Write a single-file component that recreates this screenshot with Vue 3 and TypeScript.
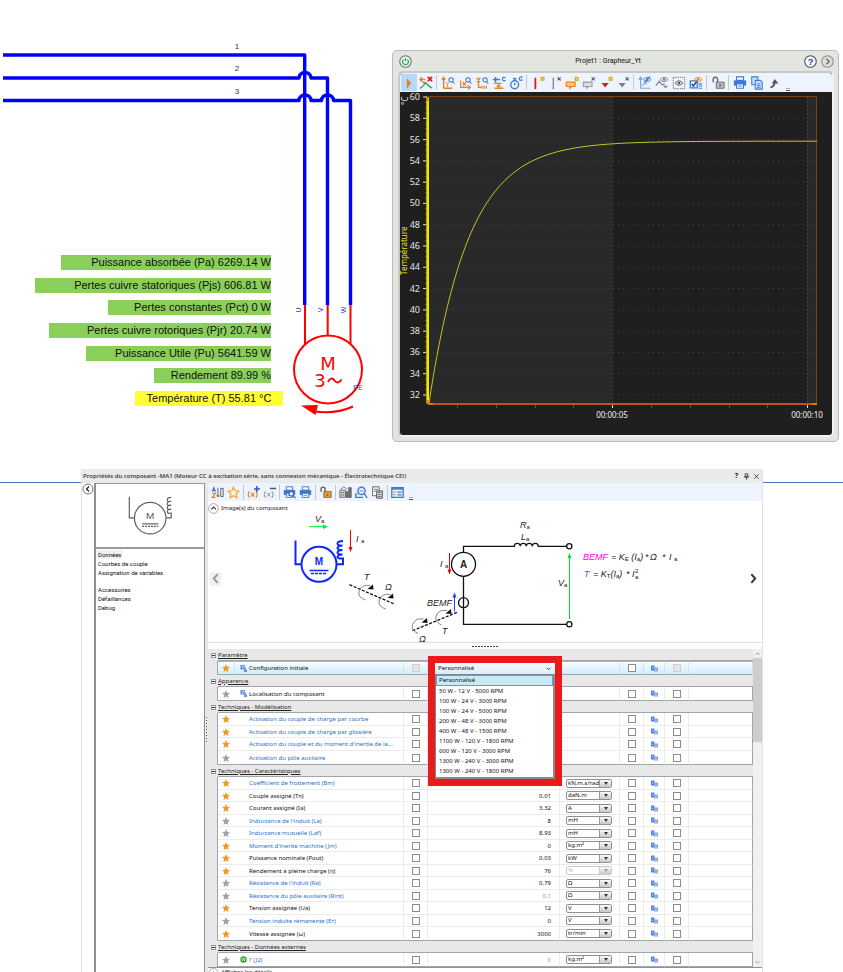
<script setup lang="ts">
import { ref } from 'vue'

interface Shape { d: string; f?: string; s?: string; w?: number; dash?: string }
interface Tool { label: string; icon: Shape[]; active?: boolean; sep?: boolean }

const OR = '#ee7d1c'
const BL = '#3f78d6'
const GR = '#7c7f84'
const RD = '#e5141c'
const YE = '#dba617'

const lens = (c: string): Shape[] => [
  { d: 'M14 4.500a2.500 2.500 0 1 1-5 0a2.500 2.500 0 0 1 5 0zM13.200 6.500l2 2.200', s: c, w: 1.2 },
]
const spark: Shape[] = [{ d: 'M11 1h4.500v4.500h-4.500z', f: YE }, { d: 'M12.500 2.500h1.500v1.500h-1.500z', f: '#fff3a8' }]
const cross: Shape[] = [{ d: 'M11 1.500l3.500 3.500M14.500 1.500l-3.500 3.500', s: '#555', w: 1.2 }]
const eye = (c: string, x = 0, y = 0): Shape[] => [
  { d: `M${6 + x} ${4 + y}q4.500-5 9 0q-4.500 5-9 0z`, s: c, w: 1 },
  { d: `M${9 + x} ${4 + y}a1.500 1.500 0 1 0 3 0a1.500 1.500 0 1 0-3 0z`, f: c },
]
const printer: Shape[] = [
  { d: 'M4 1h8v4H4z', f: '#fff', s: BL, w: 1.2 },
  { d: 'M1 5h14v6H1z', f: BL },
  { d: 'M4 9h8v5H4z', f: '#fff', s: BL, w: 1.2 },
  { d: 'M5.500 11.500h5', s: BL, w: 1 },
]
const lock = (c: string, body: string): Shape[] => [
  { d: 'M2.500 7V4q0-2.500 2.500-2.500T7.500 4v3', s: c, w: 1.6 },
  { d: 'M6 7h9v7H6z', f: body, s: c, w: 1 },
  { d: 'M9.500 9.500h2v2.500h-2z', f: c },
]

const plotTools: Tool[] = [
  { label: 'Lecture', active: true, icon: [{ d: 'M5.500 2.500l5 5.500-5 6.500z', f: OR }] },
  { label: 'Effacer les courbes', icon: [
    { d: 'M1 4h6M3.500 1.500L1 4l2.500 2.500', s: OR, w: 1.5 },
    { d: 'M10 1l5 5M15 1l-5 5', s: RD, w: 2 },
    { d: 'M1 14C5 13 6 7 9 8', s: GR, w: 1.5 }, { d: 'M4 7c4 0 6 4 11 7', s: '#3b9a3b', w: 1.5 }] },
  { label: 'Zoom vertical', sep: true, icon: [
    { d: 'M3 2v12M1 4.500L3 1.500l2 3M3 14h10', s: OR, w: 1.5 }, { d: 'M6 7l1.500 2.500L9 7M7.500 9.500v3', s: OR, w: 1 }, ...lens(BL)] },
  { label: 'Zoom horizontal', icon: [
    { d: 'M3 5v8h11M11.500 10.500L14 13l-2.500 2.500M5.500 7l3.500 4M9 7l-3.500 4', s: OR, w: 1.3 }, ...lens(BL)] },
  { label: 'Zoom X et Y', icon: [
    { d: 'M4 4v9h3M2 2l2 2.500L6 2M2 6.500h4M8 11v3.500M10.500 11v3.500M13 11v3.500', s: OR, w: 1.4 }, ...lens(BL)] },
  { label: 'Ajuster les axes', icon: [
    { d: 'M1 4h8M4 1v6', s: BL, w: 1.8 }, { d: 'M2 8.500h9M3 14h10M7.500 9v5M5 11.500h5', s: OR, w: 1.5 },
    { d: 'M15.500 2q-3.500-1.500-3.500 1.500t3.500 1.500', s: BL, w: 1.4 }] },
  { label: 'Durée', icon: [
    { d: 'M11 10a4.500 4.500 0 1 1-9 0a4.500 4.500 0 0 1 9 0zM6.500 5.500V3.500M4.500 3h4M6.500 8v2.500', s: BL, w: 1.6 },
    { d: 'M15.500 1.500q-3.500-1.500-3.500 1.500t3.500 1.500', s: BL, w: 1.4 }] },
  { label: 'Ajouter un curseur', sep: true, icon: [{ d: 'M5 2v13', s: RD, w: 2 }, ...spark] },
  { label: 'Supprimer le curseur', icon: [{ d: 'M6 2v13', s: '#666', w: 1.2 }, ...cross] },
  { label: 'Ajouter une étiquette', icon: [{ d: 'M1.500 7h10v5h-4l-2 2v-2h-4z', f: '#fbc58b', s: OR, w: 1.4 }, ...spark] },
  { label: 'Supprimer une étiquette', icon: [{ d: 'M1.500 7h10v5h-4l-2 2v-2h-4z', f: '#ddd', s: '#999', w: 1.2 }, ...cross] },
  { label: 'Ajouter un marqueur', icon: [{ d: 'M3 8h8l-4 5z', f: RD }, ...spark] },
  { label: 'Supprimer le marqueur', icon: [{ d: 'M3 8h8l-4 5z', f: GR }, ...cross] },
  { label: 'Masquer les axes', sep: true, icon: [
    { d: 'M3 2v12h11M1 4l2-2.500L5 4M5 11l3-3 2 1', s: '#7fa7e3', w: 1.4 }, ...eye(BL), { d: 'M7 7.500L14 .5', s: BL, w: 1.2 }] },
  { label: 'Masquer les courbes', icon: [
    { d: 'M1 11l4-5 3 4 3-1', s: GR, w: 1.3 }, { d: 'M9 11h6l-3 3z', f: GR }, ...eye('#777')] },
  { label: 'Tout afficher', icon: [{ d: 'M1.500 1.500h13v13h-13z', s: '#666', w: 1, dash: '1.500 1' }, ...eye('#555', -2.5, 4)] },
  { label: 'Choisir les éléments', icon: [
    { d: 'M1.500 5.500h8v8h-8z', s: BL, w: 1.5 }, { d: 'M3 9l2 2.500L9 6', s: '#1b4faf', w: 1.8 },
    { d: 'M11 9h4M11 11.500h4M11 14h4', s: BL, w: 1.2 }, ...eye(OR)] },
  { label: 'Verrouiller', sep: true, icon: lock('#666', '#bbb') },
  { label: 'Imprimer', sep: true, icon: printer },
  { label: 'Copier', icon: [
    { d: 'M2 1h7v9H2z', f: '#cfe0fa', s: BL, w: 1.2 }, { d: 'M6 5h6l2 2v8H6z', f: '#cfe0fa', s: BL, w: 1.2 }, { d: 'M8 9h4M8 11h4M8 13h4', s: BL, w: 1 }] },
  { label: 'Détacher', icon: [{ d: 'M4 13q5-1 5-8', s: '#555', w: 2 }, { d: 'M5.500 8.500L9 3.500l4 5z', f: '#555' }] },
]

const propTools: Tool[] = [
  { label: 'Trier', icon: [
    { d: 'M1.500 7L3.500 2l2 5M2.500 5.500h2', s: BL, w: 1.4 }, { d: 'M1.500 9h4l-4 5h4', s: OR, w: 1.4 },
    { d: 'M8.500 2v11M7 11l1.500 2.500L10 11', s: '#555', w: 1.1 }, { d: 'M12 3h3v10h-3z', s: '#555', w: 1.1 }] },
  { label: 'Favoris', icon: [{ d: 'M8 1.500l2 4.400 4.700.5-3.500 3.200 1 4.800L8 12l-4.200 2.400 1-4.800L1.300 6.400 6 5.900z', f: '#fff3d8', s: '#f2a33a', w: 1.5 }] },
  { label: 'Ajouter une variable', sep: true, icon: [
    { d: 'M3 6.500q-3 4 0 8M11 6.500q3 4 0 8M5 8.500l4 4.500M9 8.500L5 13', s: OR, w: 1.4 }, { d: 'M12 0v7.500M8.500 3.700h7.500', s: '#2a61c4', w: 2 }] },
  { label: 'Supprimer une variable', icon: [
    { d: 'M3 6.500q-3 4 0 8M11 6.500q3 4 0 8M5 8.500l4 4.500M9 8.500L5 13', s: GR, w: 1.1 }, { d: 'M8.500 3h7.500', s: '#555', w: 1.8 }] },
  { label: 'Aperçu', sep: true, icon: [...printer, { d: 'M13 9.500a2.800 2.800 0 1 1-5.600 0a2.800 2.800 0 0 1 5.600 0zM12.500 11.500L15.500 15', f: '#eef4fd', s: '#2a61c4', w: 1.4 }] },
  { label: 'Imprimer', icon: printer },
  { label: 'Verrouiller', sep: true, icon: lock('#6b5a35', '#f0a52c') },
  { label: 'Catalogue', sep: true, icon: [
    { d: 'M1 5h7v9H1z', f: '#ccc', s: '#666', w: 1 }, { d: 'M2.500 8h4M2.500 11h4', s: '#666', w: 1 },
    { d: 'M9 7h2v7H9zM12 2h3v12h-3z', f: '#777', s: '#555', w: 1 }, { d: 'M2 4l4-3 4 3', s: '#666', w: 1 }] },
  { label: 'Rechercher', icon: [
    { d: 'M12.500 6a4.500 4.500 0 1 1-9 0a4.500 4.500 0 0 1 9 0zM11 9l4 5.500', s: BL, w: 1.7 }, { d: 'M1 9v5h9', s: BL, w: 1.6 }, { d: 'M5.500 6h5M1 12l4-4', s: BL, w: 1 }] },
  { label: 'Calculer', icon: [
    { d: 'M2 1h8v11H2z', f: '#fff', s: '#555', w: 1.1 }, { d: 'M3.500 4h5M3.500 6.500h3', s: '#555', w: 1 },
    { d: 'M7 6h7v9H7z', f: '#ddd', s: '#444', w: 1.1 }, { d: 'M8.500 8h4M8.500 10.500h4M8.500 13h4', s: '#444', w: 1.2, dash: '1 .5' }] },
  { label: 'Options', sep: true, icon: [
    { d: 'M1 2h14v12H1z', f: '#eaf2fe', s: BL, w: 1.6 }, { d: 'M1 3.500h14', s: BL, w: 2 },
    { d: 'M3 7l1 1 2-2M3 10.500l1 1 2-2', s: '#c9661a', w: 1.2 }, { d: 'M8 7.500h5M8 11h5', s: BL, w: 1.5 }] },
]

const readouts = [
  { name: 'Puissance absorbée (Pa)', value: '6269.14 W', width: 210 },
  { name: 'Pertes cuivre statoriques (Pjs)', value: '606.81 W', width: 236 },
  { name: 'Pertes constantes (Pct)', value: '0 W', width: 163 },
  { name: 'Pertes cuivre rotoriques (Pjr)', value: '20.74 W', width: 222 },
  { name: 'Puissance Utile (Pu)', value: '5641.59 W', width: 185 },
  { name: 'Rendement', value: '89.99 %', width: 117 },
  { name: 'Température (T)', value: '55.81 °C', width: 148, warm: true },
]

/* Chart geometry, in viewBox units */
const LEFT = 28
const RIGHT = 416
const TOP = 5
const BOTTOM = 312
const yOf = (t: number) => TOP + ((60 - t) * 298) / 28
const tempTicks = Array.from({ length: 15 }, (_, i) => 60 - i * 2)
const minorTicks = Array.from({ length: 57 }, (_, i) => 60 - i * 0.5)
const secTicks = [57, 96, 135, 173, 251, 290, 329, 367]
const curve = Array.from({ length: 195 }, (_, i) => {
  const x = LEFT + 1 + i * 2
  return `${x},${yOf(55.85 - 24.6 * Math.exp(-(i * 2) / 40)).toFixed(1)}`
}).join(' ')

interface Row {
  name: string; fav?: boolean; link?: boolean; mark?: 'doc' | 'ext'
  value?: string; unit?: string; dim?: boolean; off?: boolean; open?: boolean
}
const groups: { title: string; rows: Row[] }[] = [
  { title: 'Paramètre', rows: [{ name: 'Configuration initiale', fav: true, mark: 'doc', open: true }] },
  { title: 'Apparence', rows: [{ name: 'Localisation du composant', mark: 'doc' }] },
  { title: 'Techniques - Modélisation', rows: [
    { name: 'Activation du couple de charge par courbe', fav: true, link: true },
    { name: 'Activation du couple de charge par glissière', fav: true, link: true },
    { name: 'Activation du couple et du moment d\'inertie de la...', fav: true, link: true },
    { name: 'Activation du pôle auxilaire', link: true },
  ] },
  { title: 'Techniques - Caractéristiques', rows: [
    { name: 'Coefficient de frottement (Bm)', fav: true, link: true, value: '0', unit: 'kN.m.s/rad' },
    { name: 'Couple assigné (Tn)', fav: true, value: '0.01', unit: 'daN.m' },
    { name: 'Courant assigné (Ia)', fav: true, value: '3.32', unit: 'A' },
    { name: 'Inductance de l\'induit (La)', link: true, value: '8', unit: 'mH' },
    { name: 'Inductance mutuelle (Laf)', link: true, value: '8.93', unit: 'mH' },
    { name: 'Moment d\'inertie machine (Jm)', fav: true, link: true, value: '0', unit: 'kg.m²' },
    { name: 'Puissance nominale (Pout)', fav: true, value: '0.03', unit: 'kW' },
    { name: 'Rendement à pleine charge (η)', fav: true, value: '76', unit: '%', off: true },
    { name: 'Résistance de l\'induit (Ra)', link: true, value: '0.79', unit: 'Ω' },
    { name: 'Résistance du pôle auxilaire (Rint)', link: true, value: '0.1', unit: 'Ω', dim: true },
    { name: 'Tension assignée (Ua)', fav: true, value: '12', unit: 'V' },
    { name: 'Tension induite rémanente (Er)', link: true, value: '0', unit: 'V' },
    { name: 'Vitesse assignée (ω)', fav: true, value: '3000', unit: 'tr/min' },
  ] },
  { title: 'Techniques - Données externes', rows: [
    { name: '? (J2)', link: true, mark: 'ext', value: '0', unit: 'kg.m²', dim: true },
  ] },
]

const presets = [
  'Personnalisé', '50 W - 12 V - 5000 RPM', '100 W - 24 V - 3000 RPM', '100 W - 24 V - 5000 RPM',
  '200 W - 48 V - 3000 RPM', '400 W - 48 V - 1500 RPM', '1100 W - 120 V - 1800 RPM',
  '600 W - 120 V - 3000 RPM', '1300 W - 240 V - 3000 RPM', '1300 W - 240 V - 1800 RPM',
]
const preset = ref(presets[0])
const pages = ['Données', 'Courbes de couple', 'Assignation de variables', '', 'Accessoires', 'Défaillances', 'Debug']
const page = ref(pages[0])
</script>

<template>
  <main class="page">
    <div class="top">
      <section class="schema" aria-label="Schéma du moteur">
        <svg class="wiring" viewBox="0 0 392 469" width="392" height="469">
          <g fill="none" stroke="#0000ff" stroke-width="3.4" stroke-linejoin="round">
            <path d="M3 55H304.700V305" />
            <path d="M3 78H299a6 5.500 0 0 1 12 0H327.500V305" />
            <path d="M3 100.500H299a6 5.500 0 0 1 12 0h10.500a6 5.500 0 0 1 12 0H350.500V305" />
          </g>
          <g fill="none" stroke="#ff0000" stroke-width="2">
            <path d="M305 305v39M327.700 305v31M350.500 305v39" />
            <circle cx="328" cy="369.500" r="34" />
            <path d="M353 406.500Q334 415 312 411" />
            <path d="M328 382q3-6 6.500-1.500t7-1" />
          </g>
          <path d="M301 405.500l17-.5-2.500 10z" fill="#ff0000" />
          <g class="motor">
            <text x="328" y="370">M</text>
            <text x="320" y="387">3</text>
          </g>
          <g class="wire-no">
            <text x="237" y="49">1</text>
            <text x="237" y="71">2</text>
            <text x="237" y="94">3</text>
          </g>
          <g class="pin">
            <text transform="translate(301 310) rotate(-90)">U</text>
            <text transform="translate(323 310) rotate(-90)">V</text>
            <text transform="translate(346 310) rotate(-90)">W</text>
            <text x="358" y="390">PE</text>
          </g>
        </svg>
        <ul class="readouts">
          <li v-for="r in readouts" :key="r.name" :class="{ warm: r.warm }" :style="{ width: r.width + 'px' }">
            {{ r.name }} {{ r.value }}
          </li>
        </ul>
      </section>

      <section class="plot" aria-label="Grapheur">
        <header class="plot-title">
          <button class="round" aria-label="Marche">
            <svg viewBox="0 0 12 12" width="13" height="13"><circle cx="6" cy="6" r="5.300" fill="#f2f4f0" stroke="#6f746e" /><path d="M4.200 4.200a2.700 2.700 0 1 0 3.600 0M6 2.800v3" fill="none" stroke="#2fae4a" stroke-width="1.200" /></svg>
          </button>
          <h1>Projet1 : Grapheur_Yt</h1>
          <button class="round" aria-label="Aide">
            <svg viewBox="0 0 12 12" width="13" height="13"><circle cx="6" cy="6" r="5.300" fill="#fff" stroke="#4b4f55" /><text x="6" y="9" class="help">?</text></svg>
          </button>
          <button class="round" aria-label="Suivant">
            <svg viewBox="0 0 12 12" width="13" height="13"><circle cx="6" cy="6" r="5.300" fill="#dcdedb" stroke="#8b8e8a" /><path d="M5 3.500L7.500 6 5 8.500" fill="none" stroke="#666" stroke-width="1.200" /></svg>
          </button>
        </header>
        <div class="plot-body">
          <div class="tools plot-tools">
            <template v-for="t in plotTools" :key="t.label">
              <i v-if="t.sep" class="bar"></i>
              <button :class="{ active: t.active }" :aria-label="t.label">
                <svg viewBox="0 0 16 16" width="14" height="14">
                  <path v-for="(p, i) in t.icon" :key="i" :d="p.d" :fill="p.f || 'none'" :stroke="p.s || 'none'" :stroke-width="p.w" :stroke-dasharray="p.dash" />
                </svg>
              </button>
            </template>
            <span class="more"></span>
          </div>
          <svg class="chart" viewBox="0 0 432 343">
            <rect :x="LEFT" :y="TOP" width="184" :height="BOTTOM - TOP" fill="#292929" />
            <rect x="407" :y="TOP" width="9" :height="BOTTOM - TOP" fill="#292929" />
            <g stroke="#434343" stroke-dasharray="1 4">
              <path v-for="t in tempTicks.slice(1)" :key="t" :d="`M${LEFT} ${yOf(t)}H${RIGHT}`" />
              <path :d="`M212.500 ${TOP}V${BOTTOM}M407.500 ${TOP}V${BOTTOM}`" stroke="#585858" stroke-dasharray="1 3" />
            </g>
            <path :d="`M${LEFT} 4.500H416.500V${BOTTOM}`" fill="none" stroke="#7a420f" />
            <path v-for="t in minorTicks" :key="t" :d="`M25 ${yOf(t)}h2`" stroke="#7d7d20" stroke-width="1" />
            <path v-for="t in tempTicks" :key="t" :d="`M23 ${yOf(t)}h4`" stroke="#ddd" />
            <path v-for="x in secTicks" :key="x" :d="`M${x}.500 313v3`" stroke="#555" />
            <path d="M212.500 311v5M407.500 311v5" stroke="#ddd" />
            <path :d="`M27.500 ${TOP}V311`" stroke="#b0a000" stroke-width="3" />
            <path :d="`M28 ${TOP}V311`" stroke="#ffff00" stroke-width="1.500" />
            <path d="M28 312H417" stroke="#b9541e" stroke-width="2" />
            <path d="M28 312h5M412 312h5M27.500 5v4M27.500 308v4" stroke="#e07b00" stroke-width="2" />
            <polyline :points="curve" fill="none" stroke="#c4c41c" stroke-width="1" />
            <g class="axis">
              <text v-for="t in tempTicks" :key="t" x="20" :y="yOf(t) + 3" text-anchor="end">{{ t }}</text>
            </g>
            <g class="time">
              <text x="212" y="326">00:00:05</text>
              <text x="407" y="326">00:00:10</text>
            </g>
            <text class="quantity" transform="translate(7 183) rotate(-90)">Température</text>
            <text class="unit-label" transform="translate(8 13) rotate(-90)">°C</text>
          </svg>
        </div>
      </section>
    </div>

    <div class="bottom">
      <section class="props" aria-label="Propriétés du composant">
        <header class="props-title">
          <h2>Propriétés du composant -MA1 (Moteur CC à excitation série, sans connexion mécanique - Électrotechnique CEI)</h2>
          <button aria-label="Aide">?</button>
          <button aria-label="Épingler"><svg viewBox="0 0 8 8" width="7" height="7"><path d="M2.500 1h3v3.500h-3zM1 4.500h6M4 4.500V7.500" fill="none" stroke="#333" /></svg></button>
          <button aria-label="Fermer"><svg viewBox="0 0 8 8" width="7" height="7"><path d="M1.500 1.500l5 5M6.500 1.500l-5 5" fill="none" stroke="#333" /></svg></button>
        </header>
        <div class="props-body">
          <div class="rail">
            <button class="round" aria-label="Réduire">
              <svg viewBox="0 0 12 12" width="12" height="12"><circle cx="6" cy="6" r="5" fill="#fff" stroke="#555" stroke-width=".8" /><path d="M7 3.500L4.500 6 7 8.500" fill="none" stroke="#222" stroke-width="1.200" /></svg>
            </button>
          </div>
          <aside class="side">
            <svg class="thumb" viewBox="95 484 109 64" width="109" height="64">
              <g fill="none" stroke="#606060" stroke-width="1.200">
                <circle cx="149.700" cy="518.700" r="16" />
                <path d="M128.500 497v21.500h5M171 497.500q-4 0-4 2.500t4 1.500q-4 0-4 2.500t4 1.500q-4 0-4 2.500t4 1.500q-4 0-4 2.500t4 1.500v5h-5" />
                <path d="M141.500 524.500h16.500" />
                <path d="M141.500 527h16.500" stroke-dasharray="2 1" />
              </g>
              <text x="149.700" y="519.500" class="thumb-m">M</text>
            </svg>
            <nav>
              <template v-for="(p, i) in pages" :key="i">
                <button v-if="p" :class="{ current: p === page }" @click="page = p">{{ p }}</button>
                <span v-else class="blank"></span>
              </template>
            </nav>
          </aside>
          <div class="grip" aria-hidden="true"><i></i></div>
          <div class="content">
            <div class="tools prop-tools">
              <template v-for="t in propTools" :key="t.label">
                <i v-if="t.sep" class="bar"></i>
                <button :aria-label="t.label">
                  <svg viewBox="0 0 16 16" width="13" height="13">
                    <path v-for="(p, i) in t.icon" :key="i" :d="p.d" :fill="p.f || 'none'" :stroke="p.s || 'none'" :stroke-width="p.w" :stroke-dasharray="p.dash" />
                  </svg>
                </button>
              </template>
              <span class="more"></span>
            </div>
            <div class="fold">
              <button class="round" aria-label="Replier">
                <svg viewBox="0 0 12 12" width="11" height="11"><circle cx="6" cy="6" r="5.300" fill="#fff" stroke="#888" stroke-width=".8" /><path d="M3.500 7L6 4.500 8.500 7" fill="none" stroke="#333" stroke-width="1.200" /></svg>
              </button>
              <h3>Image(s) du composant</h3>
            </div>
            <div class="gallery">
              <button class="prev" aria-label="Image précédente"><svg viewBox="0 0 8 12" width="7" height="11"><path d="M6.500 1L2 6l4.500 5" fill="none" stroke="#999" stroke-width="2.200" /></svg></button>
              <svg class="drawing" viewBox="221 515 527 128">
                <g fill="none" stroke="#0a28ff" stroke-width="2">
                  <circle cx="319" cy="564.300" r="17.500" />
                  <path d="M295.500 540.500v23.800h6M343 541q-5.500 0-5.500 2.500t5 2q-5 .5-5 2.500t5 2q-5 .5-5 2.500t5 2q-5 .5-5 2.500t5.500 1.500v5.800h-6" />
                  <path d="M309.500 570.500h19" stroke-width="1.500" />
                  <path d="M311 573.500h16" stroke-width="1.500" stroke-dasharray="3 1" />
                </g>
                <text x="319" y="564.500" class="blue-m">M</text>
                <g fill="none">
                  <path d="M309 526.700h15" stroke="#00ee2a" />
                  <path d="M350.500 530v18M449.500 553v17" stroke="#f00" />
                  <path d="M454.500 611.500V597" stroke="#1a40ff" />
                  <path d="M569.500 619V557" stroke="#00e030" />
                </g>
                <path d="M323 524.500l5 2.200-5 2.200z" fill="#00ee2a" />
                <path d="M348.500 547h4l-2 5zM447.500 569.500h4l-2 5z" fill="#f00" />
                <path d="M452.500 597.500h4l-2-5z" fill="#1a40ff" />
                <path d="M567.500 558h4l-2-5z" fill="#00e030" />
                <g fill="none" stroke="#111" stroke-width="1.300">
                  <path d="M463.500 552v-5.700h50.800a3 3 0 0 1 6 0a3 3 0 0 1 6 0a3 3 0 0 1 6 0a3 3 0 0 1 6 0h28.400M463.500 576.500v47.800h103" />
                  <circle cx="463.500" cy="564.300" r="12" />
                  <circle cx="463.500" cy="602.700" r="5" />
                  <circle cx="569.300" cy="546.300" r="2.600" fill="#fff" />
                  <circle cx="569.300" cy="624.300" r="2.600" fill="#fff" />
                  <path d="M349.500 584.700L395 604.300M412.500 630.700L458 612" stroke-dasharray="3 1.500" />
                </g>
                <g fill="none" stroke="#777" stroke-width=".9">
                  <path d="M365.500 600q-8-2.500-6.500-9q3-7 11-5.500M385.700 609q-8-2.500-6.500-9q3-7 11-5.500M418 633.500q-7-3-5.500-9q3-7 11-5.500M441.500 625q-7-3-5.500-9q3-7 11-5.500" />
                </g>
                <path d="M373 584.500l.5 5-6-.5zM393 593.500l.5 5-6-.5zM427 618l.5 5-6-.5zM451 609l.5 5-6-.5z" fill="#111" />
                <text x="463.500" y="568" class="blue-m ammeter">A</text>
                <g class="sym">
                  <text x="315" y="522">V<tspan class="sub" dy="1">a</tspan></text>
                  <text x="356" y="542">I <tspan class="sub" dy="1">a</tspan></text>
                  <text x="364" y="580">T</text>
                  <text x="385" y="590">Ω</text>
                  <text x="419" y="642">Ω</text>
                  <text x="442" y="634">T</text>
                  <text x="427" y="606">BEMF</text>
                  <text x="440" y="567">I <tspan class="sub" dy="1">a</tspan></text>
                  <text x="520" y="528">R<tspan class="sub" dy="1">a</tspan></text>
                  <text x="521" y="540">L<tspan class="sub" dy="1">a</tspan></text>
                  <text x="558" y="586">V<tspan class="sub" dy="1">a</tspan></text>
                  <text x="583" y="560" fill="#f0d">BEMF</text>
                  <text x="611" y="560">= K<tspan class="sub" dy="1">E</tspan><tspan dy="-1"> (I</tspan><tspan class="sub" dy="1">a</tspan><tspan dy="-1">)</tspan></text>
                  <text x="645" y="560">*</text>
                  <text x="650" y="560">Ω</text>
                  <text x="662" y="560">*</text>
                  <text x="669" y="560">I <tspan class="sub" dy="1">a</tspan></text>
                  <text x="584" y="577" fill="#f0d">T</text>
                  <text x="593" y="577">= K<tspan class="sub" dy="1">T</tspan><tspan dy="-1">(I</tspan><tspan class="sub" dy="1">a</tspan><tspan dy="-1">)</tspan></text>
                  <text x="626" y="577">*</text>
                  <text x="632" y="577">I</text>
                  <text x="635" y="573" class="sub">2</text>
                  <text x="635" y="579" class="sub">a</text>
                </g>
              </svg>
              <button class="next" aria-label="Image suivante"><svg viewBox="0 0 8 12" width="7" height="11"><path d="M1.500 1L6 6l-4.500 5" fill="none" stroke="#333" stroke-width="2.200" /></svg></button>
            </div>
            <div class="divider" aria-hidden="true"><i></i></div>

            <div class="sheet">
              <table>
                <colgroup>
                  <col class="c-gut"><col class="c-star"><col class="c-name"><col class="c-check"><col class="c-val">
                  <col class="c-unit"><col class="c-check"><col class="c-copy"><col class="c-check"><col>
                </colgroup>
                <tbody v-for="g in groups" :key="g.title">
                  <tr class="group">
                    <td class="gut"><button class="minus" :aria-label="'Replier ' + g.title"></button></td>
                    <th colspan="9" scope="rowgroup">{{ g.title }}</th>
                  </tr>
                  <tr v-for="r in g.rows" :key="r.name" class="row" :class="{ selected: r.open }">
                    <td class="gut"></td>
                    <td class="star">
                      <svg viewBox="0 0 16 16" width="8" height="8"><path d="M8 0l2.300 5.400 5.700.6-4.300 3.900L13 16l-5-3.200L3 16l1.300-6.100L0 6l5.700-.6z" :fill="r.fav ? '#f39a1d' : '#a3a3a3'" /></svg>
                    </td>
                    <td class="name" :class="{ link: r.link }">
                      <span class="name-in">
                        <span class="mark">
                          <svg v-if="r.mark === 'doc'" viewBox="0 0 14 14" width="7" height="7"><path d="M1 0h9v3H4v6H1zM5 4h6v5H5zM9 9h5v5H8v-3" fill="#4f7fdc" /><path d="M2 2h7M6 6h4M9 12h4" stroke="#dbe7fc" /></svg>
                          <svg v-else-if="r.mark === 'ext'" viewBox="0 0 14 14" width="7" height="7"><circle cx="7" cy="7" r="6.500" fill="#3f9c33" /><path d="M2.500 7q4.500-6 9 0M4 10l3-3 3 3" fill="none" stroke="#e9ffe0" stroke-width="1.800" /></svg>
                        </span>
                        {{ r.name }}
                      </span>
                    </td>
                    <td class="mid"><input type="checkbox" :disabled="r.open" :aria-label="'Afficher ' + r.name"></td>
                    <td class="val" :class="{ dim: r.dim }">
                      {{ r.value }}
                      <div v-if="r.open" class="combo">
                        <span class="combo-box">
                          <select v-model="preset" aria-label="Configuration initiale">
                            <option v-for="p in presets" :key="p">{{ p }}</option>
                          </select>
                          <svg viewBox="0 0 8 6" width="5" height="4"><path d="M1 1l3 3 3-3" fill="none" stroke="#444" stroke-width="1.600" /></svg>
                        </span>
                        <ul role="listbox" aria-label="Configurations">
                          <li v-for="p in presets" :key="p" role="option" :aria-selected="p === preset">
                            <button @click="preset = p">{{ p }}</button>
                          </li>
                        </ul>
                      </div>
                    </td>
                    <td class="unit">
                      <span v-if="r.unit" class="unit-box" :class="{ off: r.off }">
                        <select :disabled="r.off" :aria-label="'Unité ' + r.name"><option>{{ r.unit }}</option></select>
                        <span class="arrow"><svg viewBox="0 0 8 6" width="4" height="3"><path d="M0 0h8L4 6z" fill="currentColor" /></svg></span>
                      </span>
                    </td>
                    <td class="mid"><input type="checkbox" :aria-label="'Publier ' + r.name"></td>
                    <td class="mid copy">
                      <svg viewBox="0 0 14 14" width="7" height="7"><path d="M0 1h7v10H0z" fill="#4f7fdc" /><path d="M6 5h8v8H6z" fill="#7ba0ea" /><path d="M2 4h3M2 7h3M8 8h4M8 11h4" stroke="#e5eefe" /></svg>
                    </td>
                    <td class="mid"><input type="checkbox" :disabled="r.open" :aria-label="'Verrouiller ' + r.name"></td>
                    <td class="rest"></td>
                  </tr>
                </tbody>
              </table>
              <div class="scroll" aria-hidden="true">
                <svg viewBox="0 0 8 8" width="5" height="5"><path d="M1 6l3-3 3 3" fill="none" stroke="#888" stroke-width="1.300" /></svg>
                <i></i>
                <svg viewBox="0 0 8 8" width="5" height="5"><path d="M1 2l3 3 3-3" fill="none" stroke="#888" stroke-width="1.300" /></svg>
              </div>
            </div>
            <div class="fold details">
              <button class="round" aria-label="Déplier">
                <svg viewBox="0 0 12 12" width="11" height="11"><circle cx="6" cy="6" r="5.300" fill="#fff" stroke="#888" stroke-width=".8" /><path d="M3.500 7L6 4.500 8.500 7" fill="none" stroke="#333" stroke-width="1.200" /></svg>
              </button>
              <h3>Afficher les détails</h3>
            </div>
          </div>
        </div>
      </section>
    </div>
  </main>
</template>

<style>
body { margin: 0; background: #fff; }
</style>

<style scoped>
*, *::before, *::after { box-sizing: border-box; }
.page { height: 100vh; display: flex; flex-direction: column; overflow: hidden; font-family: "Noto Sans", sans-serif; color: #111; }
h1, h2, h3, ul { margin: 0; padding: 0; font-weight: 400; }
ul { list-style: none; }
button { border: 0; padding: 0; margin: 0; background: none; font: inherit; color: inherit; }
svg { display: block; flex: none; }
i { display: block; }

.top { display: grid; grid-template-columns: 392px minmax(0, 1fr); flex: none; }
.schema { display: grid; }
.wiring, .readouts { grid-area: 1 / 1; }
.wiring text { font-family: "Liberation Sans", sans-serif; text-anchor: middle; }
.wiring .motor text { fill: #f00; font-size: 18px; font-family: "DejaVu Sans", sans-serif; }
.wire-no { font-size: 8px; fill: #333; }
.pin { font-size: 7px; fill: #3535c8; }
.readouts { display: flex; flex-direction: column; align-items: flex-end; justify-content: space-between; height: 406px; padding: 255px 121px 0 0; font-family: "Liberation Sans", sans-serif; font-size: 11px; line-height: 15px; white-space: nowrap; }
.readouts li { background: #8acf5a; text-align: right; height: 15px; }
.readouts .warm { background: #ffff32; margin-right: -12px; text-align: center; }

.plot { display: flex; flex-direction: column; margin: 50px 4px 27px 0; border: 1px solid #b9bcb8; border-radius: 5px; background: #e2e5e0; }
.plot-title { display: flex; align-items: center; gap: 4px; height: 20px; padding: 0 4px 0 6px; }
.plot-title h1 { flex: 1; text-align: center; font-size: 7px; font-family: Roboto, sans-serif; line-height: 10px; }
.help { font: bold 9px "Liberation Sans", sans-serif; fill: #1c3fc0; text-anchor: middle; }
.plot-body { flex: 1; display: flex; flex-direction: column; margin: 0 4px 4px 5px; border: 2px solid #c6c9c5; border-bottom-color: #f2f3f1; border-right-color: #f2f3f1; border-radius: 5px; background: #1f1f1f; }
.tools { display: flex; align-items: center; gap: 1px; background: #edf4fd; }
.tools button { width: 16px; height: 17px; display: flex; align-items: center; justify-content: center; flex: none; }
.tools .active { background: #b5d8fb; }
.bar { width: 1px; height: 15px; margin: 0 2px 0 1px; background: #c3c8d0; flex: none; }
.more { width: 4px; height: 3px; margin-left: 3px; align-self: flex-end; margin-bottom: 1px; border-bottom: 1px solid #555; border-top: 1px solid #aaa; }
.plot-tools { height: 19px; padding-left: 1px; border-radius: 3px 3px 0 0; }
.chart { width: 100%; flex: 1; overflow: visible; }
.axis { font-size: 9px; fill: #e4e4e4; }
.time { font-size: 8px; fill: #f0f0f0; text-anchor: middle; }
.quantity { font-size: 8px; fill: #e8e800; }
.unit-label { font-size: 8px; fill: #e4e4e4; }

.bottom { flex: 1; min-height: 0; padding: 0 80px 0 81px; background: linear-gradient(#4a74c4, #4a74c4) 0 13px / 100% 1px no-repeat; }
.props { height: 100%; display: flex; flex-direction: column; background: #fff; border-left: 1px solid #e2e2e2; border-right: 1px solid #e2e2e2; font-size: 6px; line-height: 8px; }
.props-title { display: flex; align-items: center; gap: 3px; height: 14px; flex: none; background: #e9eaeb; padding: 0 2px 0 1px; font-weight: 700; }
.props-title h2 { flex: 1; font-family: "Open Sans", sans-serif; font-size: 6px; font-weight: 600; color: #333; white-space: nowrap; }
.props-title button { width: 7px; font-size: 7px; }
.props-body { flex: 1; display: flex; min-height: 0; }
.rail { width: 12px; flex: none; }
.side { width: 111px; flex: none; display: flex; flex-direction: column; border: 1px solid #8d8f96; border-width: 0 1px 0 2px; }
.thumb { border-top: 1px solid #999; border-bottom: 2px solid #9a9ca2; width: 100%; height: 66px; }
.thumb-m { font: 10px "Liberation Sans", sans-serif; fill: #555; text-anchor: middle; }
nav { display: flex; flex-direction: column; align-items: flex-start; padding: 1px; font-family: Roboto, sans-serif; }
nav button { height: 9px; padding: 0 1px; line-height: 9px; }
nav .current { background: #f0f0f0; }
.blank { height: 8px; }
.grip { width: 3px; flex: none; background: #e9e9e9; padding-top: 234px; }
.grip i { width: 1px; height: 27px; margin-left: 1px; background: repeating-linear-gradient(#555 0 1px, transparent 1px 3px); }
.content { flex: 1; min-width: 0; display: flex; flex-direction: column; }
.prop-tools { height: 18px; padding-left: 2px; flex: none; }
.prop-tools button { width: 15px; }
.prop-tools .bar { margin: 0 1px; }
.fold { display: flex; align-items: center; gap: 2px; height: 14px; flex: none; }
.fold h3 { font-size: 6px; font-family: "Noto Sans", sans-serif; color: #222; }
.details { height: 9px; align-items: flex-start; }
.gallery { display: flex; align-items: center; justify-content: space-between; height: 128px; padding: 0 3px 0 2px; border-bottom: 1px solid #ddd; flex: none; }
.gallery button { width: 11px; height: 14px; display: flex; align-items: center; justify-content: center; }
.prev { background: #f0f0f0; }
.drawing { flex: 1; min-width: 0; height: 128px; overflow: visible; }
.sym { font: italic 9px "Liberation Sans", sans-serif; fill: #222; }
.sub { font-style: normal; font-size: 6px; }
.blue-m { font: bold 10px "Liberation Sans", sans-serif; fill: #0a28ff; text-anchor: middle; }
.ammeter { fill: #222; }
.divider { height: 6px; flex: none; display: flex; align-items: center; justify-content: center; }
.divider i { width: 27px; height: 1px; background: repeating-linear-gradient(90deg, #444 0 2px, transparent 2px 3px); }

.sheet { display: flex; flex: none; background: #e8e8e8; border-bottom: 1px solid #8f9196; }
table { flex: 1; min-width: 0; table-layout: fixed; border-collapse: separate; border-spacing: 0; }
.c-gut { width: 10px; }
.c-star { width: 17px; }
.c-name { width: 169px; }
.c-check { width: 24px; }
.c-val { width: 132px; }
.c-unit { width: 60px; }
.c-copy { width: 21px; }
td, th { padding: 0; vertical-align: middle; font-weight: 400; line-height: 8px; overflow: visible; }
.group { height: 12px; }
.group th { text-align: left; text-decoration: underline; border-bottom: 1px solid #a2a4ab; color: #222; }
.minus { display: block; width: 5px; height: 5px; margin-left: 3px; border: 1px solid #8b98aa; background: linear-gradient(#333, #333) 50% 50% / 100% 1px no-repeat #fff; }
.row { height: 13px; }
.row:nth-child(odd) { height: 12px; }
.row td { background: #fff; border-bottom: 1px solid #ececec; border-right: 1px solid #ebebeb; }
.row .gut { background: none; border-bottom: 0; border-right-color: #a2a4ab; }
.row .star { border-right-color: transparent; }
.row .rest { border-right-color: #a2a4ab; }
.row:last-child { height: 14px; }
.row:last-child td:not(.gut) { border-bottom: 1px solid #a2a4ab; }
.selected td:not(.gut) { background: linear-gradient(#fafdff, #cdeefe); border-top: 1px solid #86c0e4; border-bottom-color: #86c0e4; border-right-color: #cfe6f2; }
.star svg { margin-left: 4px; }
.name { white-space: nowrap; }
.name-in { display: flex; align-items: center; }
.name.link { color: #1f70d0; }
.mark { width: 14px; padding-left: 5px; }
.mid { text-align: center; }
.mid svg { margin: 0 auto; }
input { appearance: none; display: block; width: 8px; height: 8px; margin: 0 auto; border: 1px solid #8c8c8c; background: #fff; }
input:disabled { background: #e4e4e4; border-color: #cfcfcf; }
.val { text-align: right; padding-right: 8px; position: relative; }
.val.dim { color: #999; }
select { appearance: none; border: 0; margin: 0; padding: 0 0 0 1px; background: none; font: inherit; color: inherit; border-radius: 0; min-width: 0; }
.unit { padding-left: 6px; }
.unit-box { display: flex; width: 46px; height: 9px; border: 1px solid #8f8f8f; border-radius: 2px; overflow: hidden; background: #fff; }
.unit-box select { flex: 1; height: 7px; line-height: 7px; }
.arrow { width: 12px; border-left: 1px solid #999; background: linear-gradient(#fafafa, #c9c9c9); display: flex; align-items: center; justify-content: center; color: #333; }
.unit-box.off { border-color: #c8c8c8; color: #999; }
.unit-box.off .arrow { color: #999; border-color: #ccc; }

.combo { position: absolute; z-index: 2; top: -6px; left: 0; width: 134px; border: 7px solid #e81a1c; background: #fff; text-align: left; }
.combo-box { display: flex; align-items: center; height: 11px; padding: 0 4px 0 2px; background: linear-gradient(#f7fbff, #dcebf8); }
.combo-box select { flex: 1; height: 10px; line-height: 9px; }
.combo ul { border: 1px solid #7c8a94; border-right: 2px solid #8a8a8a; border-bottom: 2px solid #8a8a8a; padding-bottom: 1px; }
.combo li { height: 10px; display: flex; }
.combo li:first-child { height: 11px; }
.combo li button { flex: 1; text-align: left; padding-left: 2px; line-height: 9px; border: 1px solid transparent; }
.combo li[aria-selected="true"] button { background: #cbe8f6; border-color: #4aa9d6; }

.scroll { width: 9px; flex: none; display: flex; flex-direction: column; align-items: center; background: #f0f0f0; padding: 2px 0; }
.scroll i { width: 9px; height: 84px; margin: 2px 0 auto; background: #cdcdcd; }
</style>
